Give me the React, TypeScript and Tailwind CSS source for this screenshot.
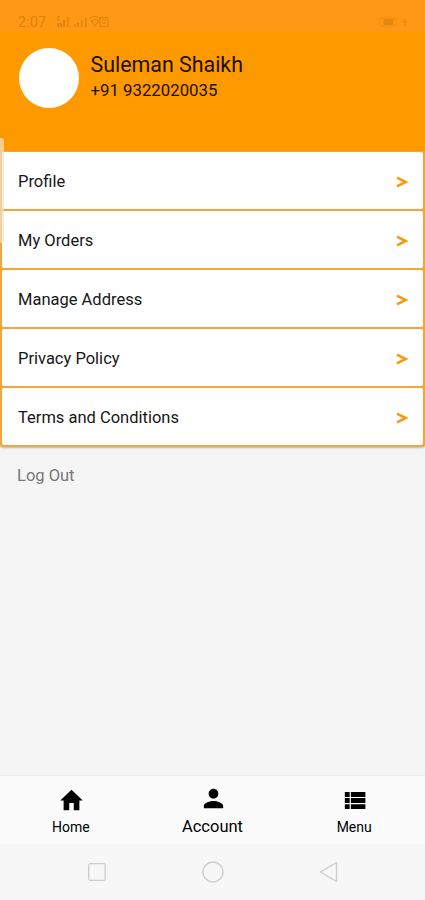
import type { ReactNode } from 'react';

const MENU_ITEMS = ['Profile', 'My Orders', 'Manage Address', 'Privacy Policy', 'Terms and Conditions'];

function StatusBar() {
  return (
    <div className="flex h-8 items-center justify-between bg-[#ff9915] pt-3 pr-[17px] pl-[18px] text-[#d9820f]">
      <div className="flex items-center">
        <span className="w-[38px] text-[14px] leading-none tracking-[0.4px]">2:07</span>
        <svg width="56" height="14" viewBox="0 0 56 14" fill="currentColor" opacity="0.85">
          <path d="M1 1h3v1.500H1zM1 4h3v1.500H1zM1 8h2v4H1zM4 8h2v4H4zM7 5h2v7H7zM11 2h1.500v10H11z" />
          <path d="M18 9h1.500v3H18zM21 8h2v4h-2zM25 5h1.500v7H25zM29 3h1.500v9H29z" />
          <path
            d="M34 3.500Q39-.5 44 3.500M35.500 6Q39 3 42.500 6L39 11zM44 2.500h8v9h-8zM46 5h4M46 8h4"
            fill="none"
            stroke="currentColor"
            strokeWidth="1.200"
          />
        </svg>
      </div>
      <svg width="30" height="12" viewBox="0 0 30 12" fill="none" stroke="currentColor" opacity="0.75">
        <rect x="1.500" y="2" width="17" height="8" rx="1.500" opacity="0.5" />
        <path d="M6 3.500h9v5H6z" fill="currentColor" />
        <path d="M27 2v8M25 6h4" />
      </svg>
    </div>
  );
}

function MenuRow({ label }: { label: string }) {
  return (
    <div className="flex flex-1 items-center justify-between rounded-[2px] bg-white pt-[2px] pr-[15px] pl-4">
      <span className="text-[16.5px] leading-5 text-[#161616]">{label}</span>
      <svg width="12" height="12" viewBox="0 0 12 12" fill="none" stroke="#f79a12" strokeWidth="2.600">
        <path d="M1 1.700L9.500 6 1 10.300" />
      </svg>
    </div>
  );
}

function Tab({ label, active, children }: { label: string; active?: boolean; children: ReactNode }) {
  return (
    <div className="flex flex-1 flex-col items-center">
      <div className={active ? 'flex h-9 items-center' : 'flex h-10 items-center'}>{children}</div>
      <span className={active ? 'text-[16.5px] leading-[22px] text-black' : 'text-[14px] leading-[14px] text-black'}>
        {label}
      </span>
    </div>
  );
}

export default function App() {
  return (
    <div className="relative flex h-[900px] w-[425px] flex-col overflow-hidden bg-[#f5f5f5] font-[Roboto,sans-serif]">
      <StatusBar />

      <header className="flex h-[119px] items-start bg-[#ff9900] pt-4 pl-[19px] text-[#1a1000]">
        <div className="h-[60px] w-[60px] rounded-full bg-white" />
        <div className="flex flex-col pt-1 pl-[11.500px]">
          <span className="text-[21.4px] leading-[26px]">Suleman Shaikh</span>
          <span className="text-[16.8px] leading-[24px]">+91 9322020035</span>
        </div>
      </header>

      <div className="flex h-[296px] flex-col gap-[2px] rounded-b-[3px] bg-[#f0a63c] px-[2px] pt-px pb-[2px] shadow-[0_1px_2px_rgba(0,0,0,0.25)]">
        {MENU_ITEMS.map((item) => (
          <MenuRow key={item} label={item} />
        ))}
      </div>

      <div className="flex-1 pt-[19px] pl-[17px] text-[16.5px] leading-5 text-[#777777]">Log Out</div>

      <nav className="flex h-[69px] border-t border-[#ebebeb] bg-[#fbfbfb] pt-[4px]">
        <Tab label="Home">
          <svg width="27" height="29" viewBox="0 0 24 24" className="ml-px" preserveAspectRatio="none">
            <path d="M10 20v-6h4v6h5v-8h3L12 3 2 12h3v8z" />
          </svg>
        </Tab>
        <Tab label="Account" active>
          <svg width="29" height="29" viewBox="0 0 24 24" className="ml-px">
            <path d="M12 12c2.210 0 4-1.790 4-4s-1.790-4-4-4-4 1.790-4 4 1.790 4 4 4zm0 2c-2.670 0-8 1.340-8 4v2h16v-2c0-2.660-5.330-4-8-4z" />
          </svg>
        </Tab>
        <Tab label="Menu">
          <svg width="29" height="29" viewBox="0 0 24 24">
            <path d="M4 14h4v-4H4v4zm0 5h4v-4H4v4zM4 9h4V5H4v4zm5 5h12v-4H9v4zm0 5h12v-4H9v4zM9 5v4h12V5H9z" />
          </svg>
        </Tab>
      </nav>

      {/* Android system buttons */}
      <div className="flex h-14 items-center justify-between bg-[#f7f7f7] pr-[86px] pl-[87px]">
        <svg width="20" height="20" viewBox="0 0 20 20" fill="none" stroke="#cccccc" strokeWidth="1.300">
          <rect x="1.700" y="1.700" width="16.600" height="16.600" rx="1.500" />
        </svg>
        <svg width="22" height="22" viewBox="0 0 22 22" fill="none" stroke="#cccccc" strokeWidth="1.300">
          <circle cx="11" cy="11" r="10" />
        </svg>
        <svg width="20" height="22" viewBox="0 0 20 22" fill="none" stroke="#cccccc" strokeWidth="1.300" strokeLinejoin="round">
          <path d="M17.500 1.500v19L1.500 11z" />
        </svg>
      </div>

      {/* edge panel handle */}
      <div className="absolute top-[138px] left-0 h-[105px] w-[4px] rounded-r-[3px] bg-[#f3e3cc]/70" />
    </div>
  );
}
